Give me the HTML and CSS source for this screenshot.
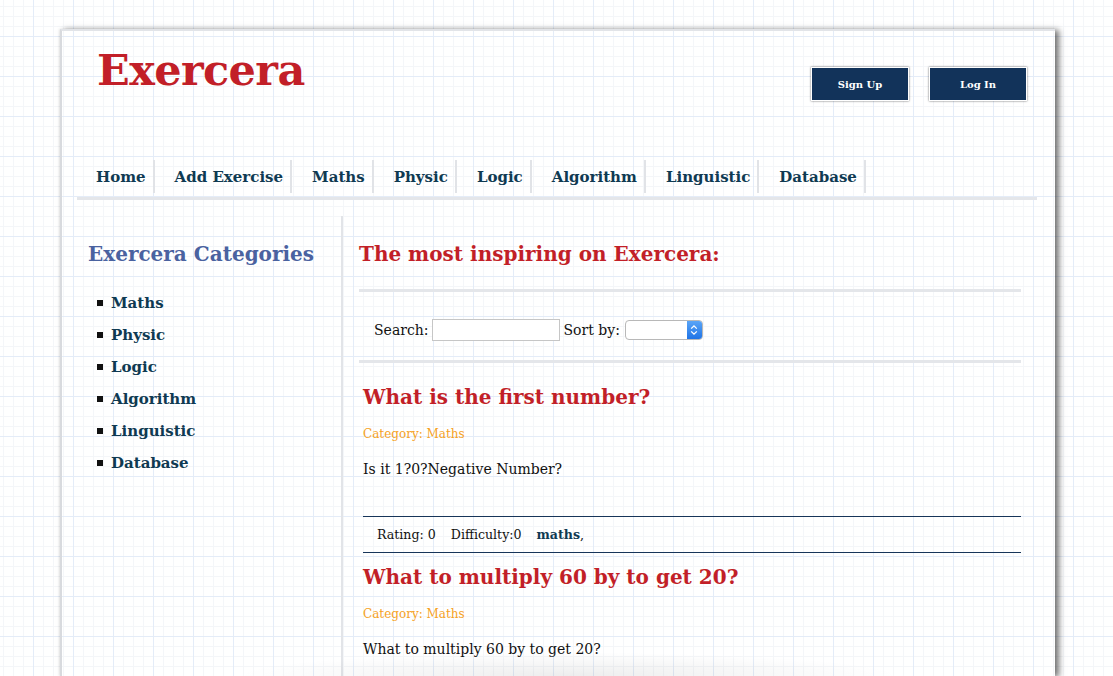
FILE: index.html
```html
<!DOCTYPE html>
<html lang="en">
<head>
<meta charset="utf-8">
<title>Exercera</title>
<link rel="stylesheet" href="styles.css">
</head>
<body>
<div class="page">
  <header class="header">
    <h1 class="logo">Exercera</h1>
    <div class="auth">
      <a class="btn" href="#">Sign Up</a>
      <a class="btn" href="#">Log In</a>
    </div>
  </header>
  <nav class="nav">
    <ul class="nav-list">
      <li class="nav-item first"><a href="#">Home</a></li>
      <li class="nav-item"><a href="#">Add Exercise</a></li>
      <li class="nav-item"><a href="#">Maths</a></li>
      <li class="nav-item"><a href="#">Physic</a></li>
      <li class="nav-item"><a href="#">Logic</a></li>
      <li class="nav-item"><a href="#">Algorithm</a></li>
      <li class="nav-item"><a href="#">Linguistic</a></li>
      <li class="nav-item"><a href="#">Database</a></li>
    </ul>
  </nav>
  <div class="content">
    <aside class="sidebar">
      <h2 class="side-title">Exercera Categories</h2>
      <ul class="cat-list">
        <li class="cat"><a href="#">Maths</a></li>
        <li class="cat"><a href="#">Physic</a></li>
        <li class="cat"><a href="#">Logic</a></li>
        <li class="cat"><a href="#">Algorithm</a></li>
        <li class="cat"><a href="#">Linguistic</a></li>
        <li class="cat"><a href="#">Database</a></li>
      </ul>
    </aside>
    <main class="main">
      <h2 class="main-title">The most inspiring on Exercera:</h2>
      <div class="filter">
        <label class="flabel">Search:</label>
        <span class="input"></span>
        <label class="flabel">Sort by:</label>
        <span class="select"><span class="select-arrows"><svg width="8" height="12" viewBox="0 0 8 12"><path d="M1.2 4.6 L4 1.8 L6.8 4.6 M1.2 7.4 L4 10.2 L6.8 7.4" fill="none" stroke="#fff" stroke-width="1.3"/></svg></span></span>
      </div>
      <article class="exercise">
        <h3 class="ex-title">What is the first number?</h3>
        <p class="ex-cat">Category: Maths</p>
        <p class="ex-body">Is it 1?0?Negative Number?</p>
        <div class="ex-meta">
          <span>Rating: 0</span>
          <span>Difficulty:0</span>
          <span><a class="tag" href="#">maths</a>,</span>
        </div>
      </article>
      <article class="exercise">
        <h3 class="ex-title">What to multiply 60 by to get 20?</h3>
        <p class="ex-cat">Category: Maths</p>
        <p class="ex-body">What to multiply 60 by to get 20?</p>
      </article>
    </main>
  </div>
  <div class="page-fade"></div>
</div>
</body>
</html>
```
FILE: styles.css
```css
html, body {
  margin: 0;
  padding: 0;
}
body {
  height: 676px;
  overflow: hidden;
  font-family: "DejaVu Serif", Georgia, serif;
  color: #111;
  background-color: #fff;
  background-image:
    linear-gradient(to right, #e4ecf8 1px, transparent 1px),
    linear-gradient(to bottom, #e4ecf8 1px, transparent 1px),
    linear-gradient(to right, #f4f6f9 1px, transparent 1px),
    linear-gradient(to bottom, #f4f6f9 1px, transparent 1px);
  background-size: 40px 40px, 40px 40px, 10px 10px, 10px 10px;
  background-position: 33px 36px, 33px 36px, 3px 6px, 3px 6px;
}
a {
  color: inherit;
  text-decoration: none;
}
.page {
  position: relative;
  margin: 29px 0 0 60px;
  width: 993px;
  height: 645px;
  border-top: 2px solid #e2e4e8;
  border-left: 2px solid #d8dade;
  box-shadow: 4px 1px 6px rgba(0, 0, 0, 0.55), -1px 0 2px rgba(0, 0, 0, 0.08);
}
.header {
  display: flex;
  justify-content: space-between;
  align-items: flex-start;
  height: 129px;
  padding: 0 28px 0 35px;
}
.logo {
  margin: 14px 0 0;
  font-size: 43px;
  line-height: 50px;
  font-weight: bold;
  color: #c21f28;
  letter-spacing: -0.6px;
}
.auth {
  display: flex;
  gap: 20px;
  margin-top: 36px;
}
.btn {
  display: flex;
  align-items: center;
  justify-content: center;
  width: 96px;
  height: 32px;
  background: #12335a;
  border: 1px solid #fff;
  box-shadow: 0 0 2px rgba(0, 0, 0, 0.6);
  color: #fff;
  font-size: 10px;
  font-weight: bold;
}
.nav {
  margin: 0 18px 0 15px;
  padding-bottom: 4px;
  border-bottom: 3px solid #e4e6ea;
}
.nav-list {
  display: flex;
  margin: 0;
  padding: 0;
  list-style: none;
}
.nav-item {
  height: 33px;
  line-height: 35px;
  padding: 0 7px 0 20px;
  border-right: 2px solid #e1e3e7;
  font-size: 15px;
  font-weight: bold;
  color: #0f3a52;
}
.nav-item.first {
  padding-left: 19px;
}
.content {
  display: flex;
  margin: 16px 18px 0 15px;
  height: 460px;
}
.sidebar {
  width: 264px;
  border-right: 2px solid #e2e4e8;
  flex: none;
}
.side-title {
  margin: 25px 0 0 11px;
  font-size: 20px;
  line-height: 26px;
  font-weight: bold;
  color: #4a62a0;
}
.cat-list {
  margin: 20px 0 0 20px;
  padding: 0;
  list-style: none;
}
.cat {
  display: flex;
  align-items: center;
  gap: 8px;
  height: 32px;
  font-size: 15px;
  font-weight: bold;
  color: #0f3a52;
}
.cat::before {
  content: "";
  width: 6px;
  height: 6px;
  background: #111;
}
.main {
  flex: 1;
  padding: 0 16px 0 16px;
}
.main-title {
  margin: 25px 0 0;
  font-size: 20px;
  line-height: 26px;
  font-weight: bold;
  color: #c21f28;
  padding-bottom: 22px;
  border-bottom: 3px solid #e4e6ea;
}
.filter {
  display: flex;
  align-items: center;
  gap: 3px;
  height: 60px;
  padding: 8px 0 0 15px;
  border-bottom: 3px solid #e4e6ea;
  font-size: 14px;
}
.flabel {
  color: #111;
}
.input {
  width: 126px;
  height: 20px;
  border: 1px solid #c6c6c6;
  background: #fff;
  margin-right: 1px;
}
.select {
  display: flex;
  justify-content: flex-end;
  width: 76px;
  height: 18px;
  border: 1px solid #b8b8b8;
  border-radius: 4px;
  background: #fff;
  margin-left: 2px;
  overflow: hidden;
}
.select-arrows {
  display: flex;
  align-items: center;
  justify-content: center;
  width: 15px;
  background: linear-gradient(#5aa5f7, #1f74e6);
}
.exercise {
  padding-left: 4px;
}
.ex-title {
  margin: 20px 0 0;
  font-size: 20px;
  line-height: 28px;
  font-weight: bold;
  color: #c21f28;
}
.ex-cat {
  margin: 14px 0 0;
  font-size: 12px;
  line-height: 18px;
  color: #f6a21e;
}
.ex-body {
  margin: 17px 0 0;
  font-size: 14px;
  line-height: 18px;
  color: #111;
}
.ex-meta {
  display: flex;
  gap: 15px;
  align-items: center;
  height: 35px;
  margin-top: 38px;
  padding-left: 14px;
  border-top: 1px solid #17355a;
  border-bottom: 1px solid #17355a;
  font-size: 12.6px;
}
.tag {
  font-weight: bold;
  color: #0f3a52;
}
.exercise + .exercise .ex-title {
  margin-top: 10px;
}
.exercise + .exercise .ex-cat {
  margin-top: 14px;
}
.exercise + .exercise .ex-body {
  margin-top: 17px;
}
.page-fade {
  position: absolute;
  left: 170px;
  right: 150px;
  bottom: 0;
  height: 24px;
  background: radial-gradient(ellipse at 50% 100%, rgba(0, 0, 0, 0.07), rgba(0, 0, 0, 0) 70%);
}
```
